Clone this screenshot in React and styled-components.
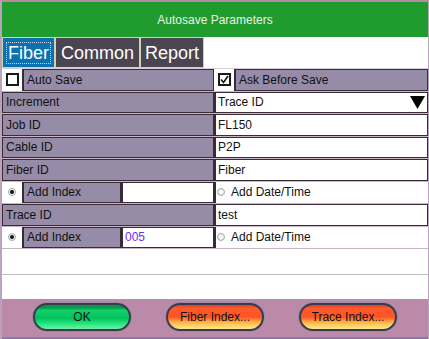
import React from "react";
import styled, { createGlobalStyle } from "styled-components";

const GlobalStyle = createGlobalStyle`
  * { box-sizing: border-box; }
  body {
    margin: 0;
    font-family: "Liberation Sans", Arial, sans-serif;
    background: #ffffff;
  }
`;

const DARK = "#3b2b39";
const LAVENDER = "#968ca7";

const Frame = styled.div`
  width: 429px;
  height: 339px;
  display: flex;
  flex-direction: column;
  background: #ffffff;
  border-top: 2px solid #b98aa6;
  border-left: 2px solid #b9a3bd;
  border-right: 1px solid #b9a3bd;
  overflow: hidden;
`;

const TitleBar = styled.div`
  height: 35px;
  background: #209b2d;
  color: #e6f4e6;
  font-size: 12px;
  display: flex;
  align-items: center;
  justify-content: center;
`;

const TabBar = styled.div`
  height: 31px;
  display: flex;
  background: #ffffff;
`;

const Tab = styled.div`
  width: ${({ $w }) => $w}px;
  background: ${({ $active }) => ($active ? "#0b71b1" : "#4a4550")};
  border: 1px solid #cfd3b5;
  color: #ffffff;
  font-size: 18px;
  display: flex;
  align-items: center;
  justify-content: center;
`;

const TabLabel = styled.span`
  padding: 0 1px;
  line-height: 20px;
  border: 1px dotted ${({ $focus }) => ($focus ? "#c8d8e8" : "transparent")};
`;

const Table = styled.div`
  height: 207px;
  border-top: 1px solid #d6cedb;
  border-bottom: 1px solid #bdbdbd;
  background: #ffffff;
`;

const Rows = styled.div`
  display: grid;
  grid-auto-rows: 21.5px;
  row-gap: 1px;
  background: #c8b6c6;
  padding-bottom: 1px;
`;

const Row = styled.div`
  display: grid;
  grid-template-columns: 212px 1fr;
`;

const Half = styled.div`
  display: flex;
  min-width: 0;
`;

const Label = styled.div`
  flex: ${({ $w }) => ($w ? `0 0 ${$w}px` : "1")};
  background: ${LAVENDER};
  border: 1px solid ${DARK};
  color: #111;
  font-size: 12px;
  padding-left: 3px;
  display: flex;
  align-items: center;
  white-space: nowrap;
`;

const Value = styled.div`
  flex: 1;
  background: #ffffff;
  border: 1px solid ${DARK};
  border-left-width: 2px;
  color: ${({ $color }) => $color || "#111"};
  font-size: 12px;
  padding-left: 2px;
  display: flex;
  align-items: center;
  justify-content: space-between;
  padding-right: 2px;
`;

const ControlCell = styled.div`
  flex: 0 0 21px;
  background: #ffffff;
  border-right: 1px solid ${DARK};
  display: flex;
  align-items: center;
  justify-content: center;
`;

const Box = styled.div`
  width: 13px;
  height: 13px;
  border: 2px solid #1a1a1a;
  background: #ffffff;
  display: flex;
  align-items: center;
  justify-content: center;
`;

const Radio = styled.div`
  width: 8px;
  height: 8px;
  border-radius: 50%;
  border: 1px solid #a8a8a8;
  background: radial-gradient(circle at 50% 40%, #ffffff, #e4e4e4);
  display: flex;
  align-items: center;
  justify-content: center;
  &::after {
    content: "";
    width: 4px;
    height: 4px;
    border-radius: 50%;
    background: ${({ $checked }) => ($checked ? "#111" : "transparent")};
  }
`;

const Option = styled.div`
  flex: 1;
  background: #ffffff;
  border-left: 2px solid ${DARK};
  display: flex;
  align-items: center;
  gap: 6px;
  padding-left: 1px;
  font-size: 12px;
  color: #111;
`;

const Blank = styled.div`
  flex: 1;
  background: #ffffff;
`;

const Footer = styled.div`
  height: 40px;
  background: #bb8aa8;
  border-bottom: 2px solid #8a78a6;
  display: flex;
  align-items: center;
  justify-content: center;
  gap: 35px;
  padding-bottom: 2px;
`;

const Button = styled.div`
  width: 98px;
  height: 28px;
  border-radius: 14px;
  border: 2px solid #3a3a4e;
  box-shadow: 0 0 0 1px #9a8aa4;
  background: ${({ $green }) =>
    $green
      ? "linear-gradient(#0a9a4a 0%, #0a9a4a 12%, #14d06a 22%, #00c25c 55%, #1ee27a 75%, #6ef2a6 100%)"
      : "linear-gradient(#d8442a 0%, #ff5a2a 15%, #ff5328 50%, #ff9a3c 65%, #ffc65a 80%, #ffe88a 100%)"};
  color: #111;
  font-size: 12px;
  display: flex;
  align-items: center;
  justify-content: center;
`;

function CheckMark() {
  return (
    <svg width="9" height="9" viewBox="0 0 9 9">
      <path d="M1 4.5 L3.5 7.5 L8 1" fill="none" stroke="#111" strokeWidth="1.6" />
    </svg>
  );
}

function Caret() {
  return (
    <svg width="15" height="13" viewBox="0 0 15 13">
      <polygon points="0,0 15,0 7.5,13" fill="#000" />
    </svg>
  );
}

function FieldRow({ label, value, children }) {
  return (
    <Row>
      <Half>
        <Label>{label}</Label>
      </Half>
      <Half>
        <Value>
          {value}
          {children}
        </Value>
      </Half>
    </Row>
  );
}

function IndexRow({ value }) {
  return (
    <Row>
      <Half>
        <ControlCell>
          <Radio $checked />
        </ControlCell>
        <Label $w={98}>Add Index</Label>
        <Value $color="#6a2ff0">{value}</Value>
      </Half>
      <Half>
        <Option>
          <Radio />
          Add Date/Time
        </Option>
      </Half>
    </Row>
  );
}

export default function App() {
  return (
    <>
      <GlobalStyle />
      <Frame>
        <TitleBar>Autosave Parameters</TitleBar>
        <TabBar>
          <Tab $w={53} $active>
            <TabLabel $focus>Fiber</TabLabel>
          </Tab>
          <Tab $w={85}>
            <TabLabel>Common</TabLabel>
          </Tab>
          <Tab $w={64}>
            <TabLabel>Report</TabLabel>
          </Tab>
        </TabBar>
        <Table>
          <Rows>
            <Row>
              <Half>
                <ControlCell>
                  <Box />
                </ControlCell>
                <Label>Auto Save</Label>
              </Half>
              <Half>
                <ControlCell>
                  <Box>
                    <CheckMark />
                  </Box>
                </ControlCell>
                <Label>Ask Before Save</Label>
              </Half>
            </Row>
            <FieldRow label="Increment" value="Trace ID">
              <Caret />
            </FieldRow>
            <FieldRow label="Job ID" value="FL150" />
            <FieldRow label="Cable ID" value="P2P" />
            <FieldRow label="Fiber ID" value="Fiber" />
            <IndexRow value="" />
            <FieldRow label="Trace ID" value="test" />
            <IndexRow value="005" />
          </Rows>
        </Table>
        <Blank />
        <Footer>
          <Button $green>OK</Button>
          <Button>Fiber Index...</Button>
          <Button>Trace Index...</Button>
        </Footer>
      </Frame>
    </>
  );
}
